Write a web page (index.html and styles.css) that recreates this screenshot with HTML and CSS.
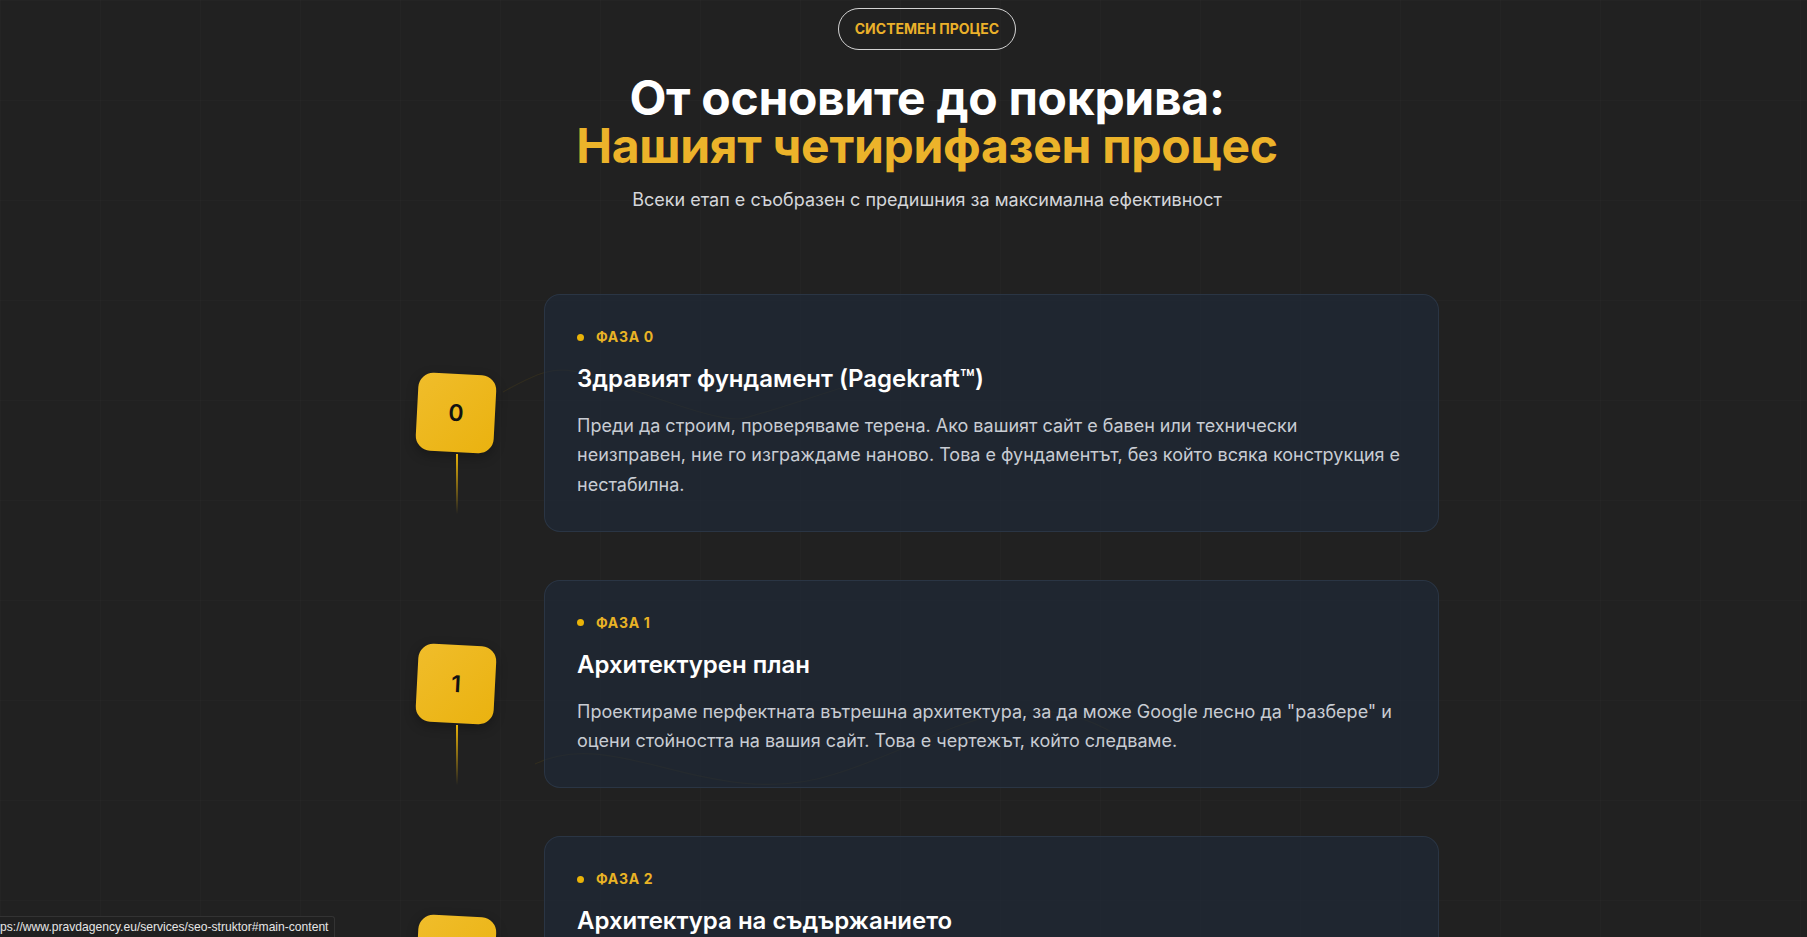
FILE: index.html
```html
<!DOCTYPE html>
<html lang="bg">
<head>
<meta charset="utf-8">
<title>Системен процес</title>
<link rel="stylesheet" href="styles.css">
</head>
<body>
<main class="page">
  <header class="intro">
    <span class="pill">СИСТЕМЕН ПРОЦЕС</span>
    <h2 class="headline">
      <span class="headline-top">От основите до покрива:</span>
      <span class="headline-accent">Нашият четирифазен процес</span>
    </h2>
    <p class="lead">Всеки етап е съобразен с предишния за максимална ефективност</p>
  </header>

  <section class="phases">
    <svg class="curves" viewBox="0 0 1024 900" preserveAspectRatio="none" aria-hidden="true">
      <path d="M88 98 C 120 80, 140 70, 170 80 C 260 110, 310 130, 330 124 C 380 110, 420 95, 440 90" />
      <path d="M120 470 C 200 430, 300 520, 420 480 C 520 450, 600 380, 700 440" />
    </svg>

    <article class="phase">
      <div class="marker">
        <div class="num">0</div>
        <span class="stem"></span>
      </div>
      <div class="card">
        <div class="tag"><span class="dot"></span>ФАЗА 0</div>
        <h3 class="card-title">Здравият фундамент (Pagekraft™)</h3>
        <p class="card-text">Преди да строим, проверяваме терена. Ако вашият сайт е бавен или технически неизправен, ние го изграждаме наново. Това е фундаментът, без който всяка конструкция е нестабилна.</p>
      </div>
    </article>

    <article class="phase">
      <div class="marker">
        <div class="num">1</div>
        <span class="stem"></span>
      </div>
      <div class="card">
        <div class="tag"><span class="dot"></span>ФАЗА 1</div>
        <h3 class="card-title">Архитектурен план</h3>
        <p class="card-text">Проектираме перфектната вътрешна архитектура, за да може Google лесно да "разбере" и оцени стойността на вашия сайт. Това е чертежът, който следваме.</p>
      </div>
    </article>

    <article class="phase">
      <div class="marker">
        <div class="num">2</div>
        <span class="stem"></span>
      </div>
      <div class="card">
        <div class="tag"><span class="dot"></span>ФАЗА 2</div>
        <h3 class="card-title">Архитектура на съдържанието</h3>
        <p class="card-text">Изграждаме съдържанието около ясни тематични клъстери, така че всяка страница да подкрепя останалите. Всеки текст е планиран с ясна цел – да отговаря на въпросите на клиентите и да носи реална стойност.</p>
      </div>
    </article>

    <article class="phase">
      <div class="marker">
        <div class="num">3</div>
        <span class="stem"></span>
      </div>
      <div class="card">
        <div class="tag"><span class="dot"></span>ФАЗА 3</div>
        <h3 class="card-title">Покривът: авторитет и растеж</h3>
        <p class="card-text">Завършваме конструкцията с изграждане на авторитет и постоянно наблюдение, за да расте сайтът стабилно във времето.</p>
      </div>
    </article>
  </section>
</main>

<div class="status">ps://www.pravdagency.eu/services/seo-struktor#main-content</div>
</body>
</html>
```

FILE: styles.css
```css
* {
  box-sizing: border-box;
}

html, body {
  margin: 0;
  padding: 0;
}

body {
  background-color: #212121;
  background-image:
    linear-gradient(rgba(255, 255, 255, 0.012) 1px, transparent 1px),
    linear-gradient(90deg, rgba(255, 255, 255, 0.012) 1px, transparent 1px);
  background-size: 100px 100px;
  font-family: Inter, "Noto Sans", sans-serif;
  color: #ffffff;
  min-height: 100vh;
}

.page {
  padding-left: 47px;
  padding-top: 8px;
  padding-bottom: 80px;
}

.intro {
  display: flex;
  flex-direction: column;
  align-items: center;
  text-align: center;
}

.pill {
  display: inline-block;
  padding: 10px 16px;
  border: 1px solid rgba(255, 255, 255, 0.8);
  border-radius: 999px;
  font-size: 14px;
  line-height: 20px;
  font-weight: 700;
  color: #ebb12a;
}

.headline {
  margin: 24px 0 0;
  font-size: 48px;
  line-height: 48px;
  font-weight: 700;
  letter-spacing: -0.3px;
}

.headline-top,
.headline-accent {
  display: block;
}

.headline-top {
  color: #ffffff;
}

.headline-accent {
  color: #ecb32a;
}

.lead {
  margin: 16px 0 0;
  font-size: 18px;
  line-height: 28px;
  color: #d4d6da;
}

.phases {
  position: relative;
  width: 1024px;
  margin: 80px auto 0;
  display: flex;
  flex-direction: column;
  gap: 48px;
}

.curves {
  position: absolute;
  left: 0;
  top: 0;
  width: 100%;
  height: 900px;
  pointer-events: none;
}

.curves path {
  fill: none;
  stroke: rgba(234, 179, 8, 0.08);
  stroke-width: 1.2;
}

.phase {
  position: relative;
  display: flex;
  align-items: center;
  gap: 47px;
}

.marker {
  position: relative;
  flex: 0 0 82px;
  height: 82px;
  display: flex;
  align-items: center;
  justify-content: center;
}

.num {
  width: 78px;
  height: 78px;
  border-radius: 15px;
  background: linear-gradient(135deg, #f0bd2b 0%, #eab20f 100%);
  transform: rotate(3deg);
  display: flex;
  align-items: center;
  justify-content: center;
  font-size: 23px;
  font-weight: 600;
  color: #121212;
  box-shadow: 0 4px 12px rgba(0, 0, 0, 0.3);
}

.stem {
  position: absolute;
  top: 100%;
  left: 41px;
  width: 2px;
  height: 60px;
  background: linear-gradient(180deg, #eab308 0%, rgba(234, 179, 8, 0) 100%);
}

.card {
  flex: 1;
  position: relative;
  padding: 32px;
  border: 1px solid rgba(51, 65, 85, 0.55);
  border-radius: 16px;
  background: rgba(30, 41, 59, 0.6);
}

.tag {
  display: flex;
  align-items: center;
  gap: 12px;
  font-size: 14px;
  line-height: 20px;
  font-weight: 700;
  color: #e9b325;
  letter-spacing: 0.7px;
}

.dot {
  width: 7px;
  height: 7px;
  border-radius: 50%;
  background: #eab308;
}

.card-title {
  margin: 16px 0 0;
  font-size: 24px;
  line-height: 32px;
  font-weight: 600;
  color: #ffffff;
}

.card-text {
  margin: 16px 0 0;
  font-size: 18px;
  line-height: 29.25px;
  color: #c8ccd3;
}

.status {
  position: fixed;
  left: 0;
  bottom: 0;
  height: 21px;
  padding: 0 6px 0 0;
  background: #202020;
  border-top: 1px solid #333333;
  border-right: 1px solid #333333;
  border-top-right-radius: 3px;
  font-family: "Liberation Sans", Arial, sans-serif;
  font-size: 12.1px;
  line-height: 20px;
  color: #e6e6e6;
  white-space: nowrap;
}
```
